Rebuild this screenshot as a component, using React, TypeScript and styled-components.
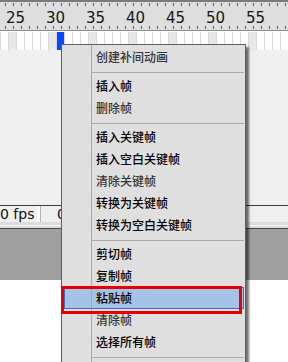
import styled, { createGlobalStyle } from 'styled-components'

const GlobalStyle = createGlobalStyle`
  html, body {
    margin: 0;
    padding: 0;
  }
  body {
    width: 288px;
    height: 362px;
    overflow: hidden;
    background: #ffffff;
    font-family: "DejaVu Sans", sans-serif;
  }
`

const Page = styled.div`
  position: relative;
  width: 288px;
  height: 362px;
  display: flex;
  flex-direction: column;
  overflow: hidden;
`

const tick = 'linear-gradient(to right, transparent 5px, #5a5a5a 5px, #5a5a5a 6px, transparent 6px)'

const Ruler = styled.div`
  flex: none;
  height: 31px;
  box-sizing: border-box;
  border-top: 2px solid #7c7c7c;
  border-bottom: 1px solid #8c8c8c;
  background-color: #dedede;
  background-image: ${tick}, ${tick};
  background-size: 8px 3px, 8px 3px;
  background-position: 0 1px, 0 24px;
  background-repeat: repeat-x;
  display: flex;
  align-items: center;
  padding: 4px 0 0 6px;
`

const RulerLabel = styled.span`
  flex: none;
  width: 40px;
  font-size: 15px;
  line-height: 15px;
  color: #151515;
`

const FrameRow = styled.div`
  flex: none;
  height: 18px;
  border-top: 1px solid #ffffff;
  background: #ffffff;
  display: flex;
`

const Cell = styled.div<{ $kind: 'plain' | 'key' | 'head' }>`
  flex: none;
  width: 8px;
  box-sizing: border-box;
  border-left: 1px solid #d8d8d8;
  background: ${({ $kind }) =>
    $kind === 'head' ? '#0a46ff' : $kind === 'key' ? '#e8e8e8' : '#ffffff'};
`

const TimelineBody = styled.div`
  flex: none;
  height: 155px;
  background: #efefef;
`

const StatusBar = styled.div`
  flex: none;
  height: 19px;
  border-top: 1px solid #3c3c3c;
  background: #dcdcdc;
  display: flex;
  align-items: flex-start;
`

const Field = styled.div<{ $width?: number; $align?: 'left' | 'right' }>`
  flex: ${({ $width }) => ($width ? 'none' : '1')};
  width: ${({ $width }) => ($width ? `${$width}px` : 'auto')};
  height: 16px;
  box-sizing: border-box;
  background: #efefef;
  font-size: 14px;
  line-height: 16px;
  color: #111111;
  white-space: nowrap;
  text-align: ${({ $align }) => $align ?? 'left'};
  padding: ${({ $align }) => ($align === 'right' ? '0 7px 0 0' : '0 0 0 16px')};
`

const FieldDivider = styled.div`
  flex: none;
  width: 4px;
  height: 16px;
  box-sizing: border-box;
  background: #fafafa;
  border-right: 1px solid #b4b4b4;
`

const Splitter = styled.div`
  flex: none;
  height: 2px;
  border-top: 1px solid #f6f6f6;
  border-bottom: 1px solid #4a4a4a;
  background: #dcdcdc;
`

const Stage = styled.div`
  flex: none;
  height: 51px;
  background: #a0a0a0;
`

const Canvas = styled.div`
  flex: 1;
  background: #ffffff;
`

const Menu = styled.div`
  position: absolute;
  top: 44px;
  left: 61px;
  width: 185px;
  box-sizing: border-box;
  border: 1px solid #5e5e5e;
  padding: 1px 1px 4px 2px;
  background: linear-gradient(to right, #dfdfdf 29px, #a9a9a9 29px, #a9a9a9 30px, #dfdfdf 30px);
  box-shadow: 3px 3px 2px rgba(0, 0, 0, 0.55);
  font-family: "Noto Sans CJK SC", "Noto Sans", sans-serif;
`

const MenuItem = styled.div<{ $dim?: boolean; $active?: boolean }>`
  height: 22px;
  box-sizing: border-box;
  border: 1px solid ${({ $active }) => ($active ? '#3c6fc1' : 'transparent')};
  background: ${({ $active }) =>
    $active
      ? 'linear-gradient(to right, #a5c3e6 26px, #8eaed6 26px, #8eaed6 27px, #a5c3e6 27px)'
      : 'transparent'};
  padding-left: 31px;
  font-size: 12px;
  font-weight: 500;
  line-height: 20px;
  color: ${({ $dim }) => ($dim ? '#363636' : '#000000')};
  white-space: nowrap;
`

const MenuSeparator = styled.div`
  height: 1px;
  margin: 4px 0 2px 27px;
  background: #a9a9a9;
`

const Annotation = styled.div`
  position: absolute;
  left: 61px;
  top: 286px;
  width: 181px;
  height: 28px;
  box-sizing: border-box;
  border: 3px solid #e80000;
`

type Entry = { label: string; dim?: boolean; active?: boolean } | 'sep'

const entries: Entry[] = [
  { label: '创建补间动画', dim: true },
  'sep',
  { label: '插入帧' },
  { label: '删除帧', dim: true },
  'sep',
  { label: '插入关键帧' },
  { label: '插入空白关键帧' },
  { label: '清除关键帧', dim: true },
  { label: '转换为关键帧' },
  { label: '转换为空白关键帧' },
  'sep',
  { label: '剪切帧' },
  { label: '复制帧' },
  { label: '粘贴帧', active: true },
  { label: '清除帧', dim: true },
  { label: '选择所有帧' },
  'sep',
]

const labels = [25, 30, 35, 40, 45, 50, 55]

export default function App() {
  const cells = Array.from({ length: 36 }, (_, i) =>
    i === 7 ? 'head' : i % 5 === 1 ? 'key' : 'plain',
  ) as ('plain' | 'key' | 'head')[]

  return (
    <>
      <GlobalStyle />
      <Page>
        <Ruler>
          {labels.map((n) => (
            <RulerLabel key={n}>{n}</RulerLabel>
          ))}
        </Ruler>
        <FrameRow>
          {cells.map((kind, i) => (
            <Cell key={i} $kind={kind} />
          ))}
        </FrameRow>
        <TimelineBody />
        <StatusBar>
          <Field $width={37} $align="right">0 fps</Field>
          <FieldDivider />
          <Field>0.0s</Field>
        </StatusBar>
        <Splitter />
        <Stage />
        <Canvas />

        <Menu>
          {entries.map((e, i) =>
            e === 'sep' ? (
              <MenuSeparator key={i} />
            ) : (
              <MenuItem key={i} $dim={e.dim} $active={e.active}>
                {e.label}
              </MenuItem>
            ),
          )}
        </Menu>
        <Annotation />
      </Page>
    </>
  )
}
